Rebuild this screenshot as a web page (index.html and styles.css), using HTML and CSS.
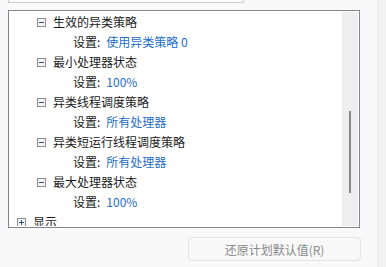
FILE: index.html
```html
<!DOCTYPE html>
<html>
<head>
<meta charset="utf-8">
<link rel="stylesheet" href="styles.css">
</head>
<body>
<div class="page">
  <div class="main">
    <div class="topbox"></div>
    <div class="treebox">
      <div class="tree">
        <div class="row l2"><svg class="tg" viewBox="0 0 9 9"><rect x="0.5" y="0.5" width="8" height="8" class="tgbox"/><path d="M2 4.5h5" class="tgmark"/></svg><span class="lbl">生效的异类策略</span></div>
        <div class="row l3"><span class="key">设置:</span><span class="val">使用异类策略 0</span></div>
        <div class="row l2"><svg class="tg" viewBox="0 0 9 9"><rect x="0.5" y="0.5" width="8" height="8" class="tgbox"/><path d="M2 4.5h5" class="tgmark"/></svg><span class="lbl">最小处理器状态</span></div>
        <div class="row l3"><span class="key">设置:</span><span class="val">100%</span></div>
        <div class="row l2"><svg class="tg" viewBox="0 0 9 9"><rect x="0.5" y="0.5" width="8" height="8" class="tgbox"/><path d="M2 4.5h5" class="tgmark"/></svg><span class="lbl">异类线程调度策略</span></div>
        <div class="row l3"><span class="key">设置:</span><span class="val">所有处理器</span></div>
        <div class="row l2"><svg class="tg" viewBox="0 0 9 9"><rect x="0.5" y="0.5" width="8" height="8" class="tgbox"/><path d="M2 4.5h5" class="tgmark"/></svg><span class="lbl">异类短运行线程调度策略</span></div>
        <div class="row l3"><span class="key">设置:</span><span class="val">所有处理器</span></div>
        <div class="row l2"><svg class="tg" viewBox="0 0 9 9"><rect x="0.5" y="0.5" width="8" height="8" class="tgbox"/><path d="M2 4.5h5" class="tgmark"/></svg><span class="lbl">最大处理器状态</span></div>
        <div class="row l3"><span class="key">设置:</span><span class="val">100%</span></div>
        <div class="row l1"><svg class="tg" viewBox="0 0 9 9"><rect x="0.5" y="0.5" width="8" height="8" class="tgbox"/><path d="M2 4.5h5M4.5 2v5" class="tgmark"/></svg><span class="lbl">显示</span></div>
      </div>
      <div class="vscroll"><div class="thumb"></div></div>
    </div>
    <div class="btnrow"><button class="btn" disabled>还原计划默认值(R)</button></div>
  </div>
  <div class="edge"></div>
</div>
</body>
</html>
```
FILE: styles.css
```css
html, body {
  margin: 0;
  padding: 0;
  background: #f9f9f9;
}
body {
  font-family: "Noto Sans CJK SC", "Microsoft YaHei", sans-serif;
  font-size: 12px;
  color: #1a1a1a;
}
.page {
  display: flex;
  width: 386px;
  height: 267px;
  overflow: hidden;
}
.main {
  width: 377px;
  display: flex;
  flex-direction: column;
}
.edge {
  width: 8px;
  border-left: 1px solid #e6e6e6;
  background: #f2f2f2;
}
.topbox {
  box-sizing: border-box;
  margin-left: 8px;
  width: 236px;
  height: 3px;
  border: 1px solid #cdcdcd;
  border-top: none;
  background: #fbfbfb;
}
.treebox {
  box-sizing: border-box;
  margin-top: 7px;
  margin-left: 8px;
  width: 352px;
  height: 218px;
  border: 1px solid #858590;
  padding: 1px;
  background: #ffffff;
  display: flex;
  overflow: hidden;
}
.tree {
  flex: 1;
  overflow: hidden;
  display: flex;
  flex-direction: column;
}
.row {
  flex: none;
  height: 20px;
  line-height: 20px;
  display: flex;
  align-items: center;
  white-space: nowrap;
}
.l1 { padding-left: 7px; }
.l2 { padding-left: 27px; }
.l3 { padding-left: 63px; }
.tg {
  width: 9px;
  height: 9px;
  flex: none;
  margin-right: 7px;
}
.tgbox {
  fill: #f3f3f3;
  stroke: #8f8f8f;
  stroke-width: 1;
}
.tgmark {
  stroke: #34508a;
  stroke-width: 1;
  fill: none;
}
.key {
  color: #1a1a1a;
}
.val {
  margin-left: 6px;
  color: #1b6ccb;
}
.vscroll {
  width: 16px;
  flex: none;
  background: #eeeeee;
  position: relative;
}
.thumb {
  position: absolute;
  left: 7px;
  top: 99px;
  width: 2px;
  height: 82px;
  background: #8a8a8a;
}
.btnrow {
  margin-top: 9px;
  padding-left: 188px;
}
.btn {
  box-sizing: border-box;
  width: 173px;
  height: 24px;
  border: 1px solid #e3e3e3;
  border-radius: 4px;
  background: #f9f9f9;
  color: #8a8a8a;
  font-family: "Noto Sans CJK SC", "Microsoft YaHei", sans-serif;
  font-size: 12px;
  padding: 0;
}
```
